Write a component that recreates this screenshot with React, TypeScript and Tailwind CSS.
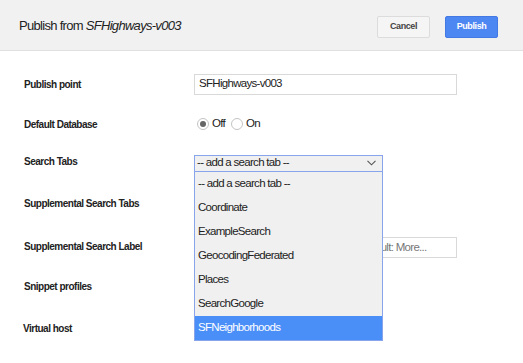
const font = "font-['Liberation_Sans',Arial,sans-serif]";

const tabs = [
  "-- add a search tab --",
  "Coordinate",
  "ExampleSearch",
  "GeocodingFederated",
  "Places",
  "SearchGoogle",
  "SFNeighborhoods",
];

function Label({ children }: { children: React.ReactNode }) {
  return (
    <div className="w-[194px] shrink-0 pl-[24px] text-[10px] font-bold tracking-[-0.5px] text-[#222]">
      {children}
    </div>
  );
}

function Radio({ checked, label }: { checked?: boolean; label: string }) {
  return (
    <label className="flex items-center gap-[3px] text-[11.5px] tracking-[-0.7px] text-[#222]">
      <span className="flex h-[12px] w-[12px] items-center justify-center rounded-full border border-[#c4c4c4] bg-white">
        {checked && <span className="h-[6px] w-[6px] rounded-full bg-[#666]" />}
      </span>
      {label}
    </label>
  );
}

export default function App() {
  return (
    <div className={`h-[363px] w-[523px] overflow-hidden bg-white ${font}`}>
      <div className="flex h-[51px] items-start justify-between border-b border-[#e0e0e0] bg-[#f1f1f1] pl-[19px] pr-[25px] pt-[16px]">
        <div className="mt-[2px] text-[13px] leading-[16px] tracking-[-0.7px] text-[#222]">
          Publish from <i>SFHighways-v003</i>
        </div>
        <div className="flex gap-[15px]">
          <button className="h-[22px] w-[53px] rounded-[2px] border border-[#dcdcdc] bg-[#f5f5f5] text-[9px] font-bold tracking-[-0.4px] text-[#444]">
            Cancel
          </button>
          <button className="h-[22px] w-[53px] rounded-[2px] border border-[#4479e4] bg-[#4d87f2] text-[9px] font-bold tracking-[-0.4px] text-white">
            Publish
          </button>
        </div>
      </div>

      <div className="pt-[13px]">
        <div className="flex h-[40px] items-center">
          <Label>Publish point</Label>
          <div className="flex h-[21px] w-[263px] items-center border border-[#d9d9d9] px-[4px] text-[11.5px] tracking-[-0.7px] text-[#222]">
            SFHighways-v003
          </div>
        </div>

        <div className="flex h-[40px] items-center">
          <Label>Default Database</Label>
          <div className="flex items-center gap-[6px] pl-[3px]">
            <Radio checked label="Off" />
            <Radio label="On" />
          </div>
        </div>

        <div className="flex h-[34px] items-center">
          <Label>Search Tabs</Label>
          <div className="relative z-10 mt-[4px] h-[17px] w-[189px]">
            <div className="flex h-[17px] items-center justify-between border border-[#88a4ea] bg-[#f0f0f0] pl-[2px] pr-[6px] text-[11.5px] tracking-[-0.7px] text-[#222]">
              <span>-- add a search tab --</span>
              <svg width="9" height="6" viewBox="0 0 9 6" fill="none">
                <path d="M0.5 0.8 L4.5 4.8 L8.5 0.8" stroke="#555" strokeWidth="1.1" />
              </svg>
            </div>
            <div className="absolute left-0 top-[17px] w-[189px] border-x border-b border-[#88a4ea] bg-[#f0f0f0]">
              {tabs.map((t, i) => (
                <div
                  key={t}
                  className={`flex h-[24px] items-center pl-[3px] text-[11.5px] tracking-[-0.7px] ${
                    i === tabs.length - 1 ? "bg-[#4a8ef8] text-white" : "text-[#222]"
                  }`}
                >
                  {t}
                </div>
              ))}
            </div>
          </div>
        </div>

        <div className="flex h-[50px] items-center">
          <Label>Supplemental Search Tabs</Label>
        </div>

        <div className="flex h-[36px] items-center">
          <Label>Supplemental Search Label</Label>
          <div className="mt-[3px] flex h-[21px] w-[263px] items-center overflow-hidden whitespace-nowrap border border-[#d9d9d9] px-[4px] text-[11.5px] tracking-[-0.7px] text-[#777]">
            Label for supplemental search tabs. Default: More...
          </div>
        </div>

        <div className="flex h-[44px] items-center">
          <Label>Snippet profiles</Label>
        </div>

        <div className="flex h-[40px] items-center">
          <div className="pl-[23px] text-[10px] font-bold tracking-[-0.5px] text-[#222]">Virtual host</div>
        </div>
      </div>
    </div>
  );
}
